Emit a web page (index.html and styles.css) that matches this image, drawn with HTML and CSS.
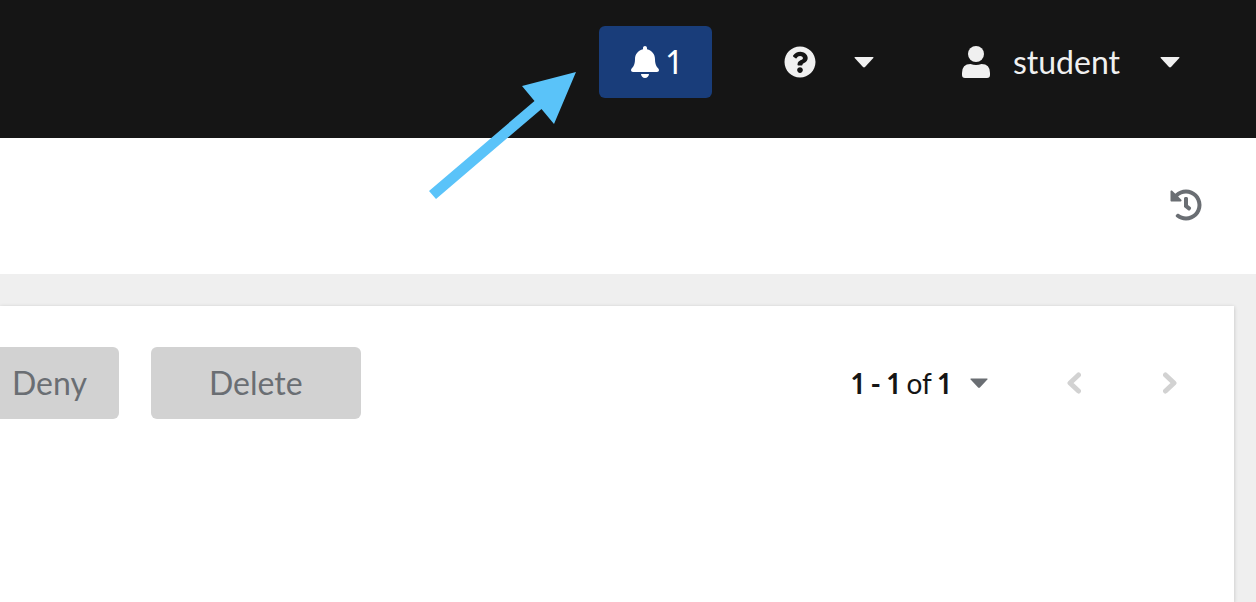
FILE: index.html
```html
<!DOCTYPE html>
<html lang="en">
<head>
<meta charset="utf-8">
<title>Approvals</title>
<link rel="stylesheet" href="styles.css">
</head>
<body>
<header class="masthead">
  <button class="bar-button notifications" type="button" aria-label="Notifications, 1 pending">
    <svg class="icon-bell" viewBox="0 0 448 512" aria-hidden="true"><path d="M224 512c35.32 0 63.97-28.65 63.97-64H160.03c0 35.35 28.65 64 63.97 64zm215.39-149.71c-19.32-20.76-55.47-51.99-55.47-154.29 0-77.7-54.48-139.9-127.94-155.16V32c0-17.67-14.32-32-31.98-32s-31.98 14.33-31.98 32v20.84C118.56 68.1 64.08 130.3 64.08 208c0 102.3-36.15 133.53-55.47 154.29-6 6.45-8.66 14.16-8.61 21.71.11 16.4 12.98 32 32.1 32h383.8c19.12 0 32-15.6 32.1-32 .05-7.55-2.61-15.27-8.61-21.71z"/></svg>
    <span>1</span>
  </button>
  <button class="bar-button help" type="button" aria-label="Help">
    <svg class="icon" viewBox="0 0 512 512" aria-hidden="true"><path d="M504 256c0 136.997-111.043 248-248 248S8 392.997 8 256C8 119.083 119.043 8 256 8s248 111.083 248 248zM262.655 90c-54.497 0-89.255 22.957-116.549 63.758-3.536 5.286-2.353 12.415 2.715 16.258l34.699 26.31c5.205 3.947 12.621 3.008 16.665-2.122 17.864-22.658 30.113-35.797 57.303-35.797 20.429 0 45.698 13.148 45.698 32.958 0 14.976-12.363 22.667-32.534 33.976C247.128 238.528 216 254.941 216 296v4c0 6.627 5.373 12 12 12h56c6.627 0 12-5.373 12-12v-1.333c0-28.462 83.186-29.647 83.186-106.667 0-58.002-60.165-102-116.531-102zM256 338c-25.365 0-46 20.635-46 46 0 25.364 20.635 46 46 46s46-20.636 46-46c0-25.365-20.635-46-46-46z"/></svg>
    <svg class="caret" viewBox="0 0 20 12" aria-hidden="true"><path d="M1.2 1h17.6q1.3 0 .5 1L11 11q-1 .9-2 0L.7 2q-.8-1 .5-1z"/></svg>
  </button>
  <button class="bar-button account" type="button">
    <svg class="icon-user" viewBox="0 0 28 32" aria-hidden="true"><circle cx="14" cy="8" r="8"/><path d="M8.500 18Q14 20 19.500 18Q28 18 28 27v2q0 3-3 3H3q-3 0-3-3v-2q0-9 8.500-9z"/></svg>
    <span class="account-name">student</span>
    <svg class="caret" viewBox="0 0 20 12" aria-hidden="true"><path d="M1.2 1h17.6q1.3 0 .5 1L11 11q-1 .9-2 0L.7 2q-.8-1 .5-1z"/></svg>
  </button>
</header>
<svg class="callout-arrow" viewBox="0 0 147 127" aria-hidden="true"><path d="M0 119 105.500 29 93 14 147 0 125 52 112.500 37 7 127z"/></svg>
<section class="page-header">
  <button class="history" type="button" aria-label="Activity history">
    <svg class="icon" viewBox="0 0 512 512" aria-hidden="true"><path d="M504 255.531c.253 136.64-111.18 248.372-247.82 248.468-59.015.042-113.223-20.53-155.822-54.911-11.077-8.94-11.905-25.541-1.839-35.607l11.267-11.267c8.609-8.609 22.353-9.551 31.891-1.984C173.062 425.135 212.781 440 256 440c101.705 0 184-82.311 184-184 0-101.705-82.311-184-184-184-48.814 0-93.149 18.969-126.068 49.932l50.754 50.754c10.08 10.08 2.941 27.314-11.313 27.314H24c-8.837 0-16-7.163-16-16V38.627c0-14.254 17.234-21.393 27.314-11.314l49.372 49.372C129.209 34.136 189.552 8 256 8c136.81 0 247.747 110.78 248 247.531zm-180.912 78.784l9.823-12.63c8.138-10.463 6.253-25.542-4.21-33.679L288 256.349V152c0-13.255-10.745-24-24-24h-16c-13.255 0-24 10.745-24 24v135.651l65.409 50.874c10.463 8.137 25.541 6.253 33.679-4.21z"/></svg>
  </button>
</section>
<main class="content">
  <div class="card">
    <div class="toolbar">
      <button class="action deny" type="button" disabled>Deny</button>
      <button class="action delete" type="button" disabled>Delete</button>
      <div class="pagination">
        <button class="range" type="button">
          <span><b>1 - 1</b> of <b>1</b></span>
          <svg class="caret caret-small" viewBox="0 0 20 12" aria-hidden="true"><path d="M1.2 1h17.6q1.3 0 .5 1L11 11q-1 .9-2 0L.7 2q-.8-1 .5-1z"/></svg>
        </button>
        <nav class="pager" aria-label="Pagination">
          <button class="step" type="button" disabled aria-label="Previous page"><svg class="chevron" viewBox="0 0 14 22" aria-hidden="true"><path d="M11.500 3 3 11l8.500 8"/></svg></button>
          <button class="step" type="button" disabled aria-label="Next page"><svg class="chevron" viewBox="0 0 14 22" aria-hidden="true"><path d="M2.500 3 11 11l-8.500 8"/></svg></button>
        </nav>
      </div>
    </div>
  </div>
</main>
</body>
</html>
```
FILE: styles.css
```css
* { box-sizing: border-box; }

body {
  display: flex;
  flex-direction: column;
  min-height: 100vh;
  margin: 0;
  background: #efefef;
  color: #151515;
  font-family: Lato, "Open Sans", sans-serif;
  font-size: 32px;
  font-variant-numeric: proportional-nums;
  line-height: 48px;
}

button {
  border: 0;
  background: none;
  color: inherit;
  font: inherit;
  font-variant-numeric: inherit;
}

svg {
  display: block;
  flex: none;
  fill: currentColor;
}

.masthead {
  display: flex;
  justify-content: flex-end;
  padding: 26px 44px 40px;
  background: #151515;
  color: #f0f0f0;
}

.bar-button {
  display: flex;
  align-items: center;
  height: 72px;
  padding: 0 32px;
}

.notifications {
  gap: 8px;
  margin-right: 40px;
  border-radius: 6px;
  background: #193d7a;
  color: #fff;
}

.help {
  gap: 38px;
  margin-right: 24px;
}

.icon { width: 32px; height: 32px; }
.icon-bell,
.icon-user { width: 28px; height: 32px; }
.account-name { margin: 0 40px 0 23px; }
.caret { width: 20px; height: 12px; }

.callout-arrow {
  position: absolute;
  top: 72px;
  left: 429px;
  width: 147px;
  height: 127px;
  fill: #5ac3f9;
}

.page-header {
  display: flex;
  justify-content: flex-end;
  padding: 35px 22px 37px;
  background: #fff;
}

.history {
  padding: 16px 32px;
  color: #6a6e73;
}

.content {
  display: flex;
  flex: 1;
  padding: 32px 22px 0 0;
}

.card {
  flex: 1;
  background: #fff;
  box-shadow: 0 1px 4px rgba(0, 0, 0, 0.2);
}

.toolbar {
  display: flex;
  align-items: center;
  padding: 41px 41px 0 0;
}

.action {
  height: 72px;
  border-radius: 6px;
  background: #d2d2d2;
  color: #6a6e73;
}

.deny {
  margin-right: 32px;
  padding: 0 32px 0 12px;
  border-radius: 0 6px 6px 0;
}

.delete { padding: 0 58px; }

.pagination {
  display: flex;
  align-items: center;
  gap: 63px;
  margin-left: auto;
}

.range {
  display: flex;
  align-items: center;
  gap: 20px;
  padding: 0;
  font-size: 28px;
}

.caret-small { width: 18px; color: #6a6e73; }

.pager {
  display: flex;
  gap: 50px;
}

.step {
  padding: 24px 16px;
  color: #d2d2d2;
}

.chevron {
  width: 14px;
  height: 22px;
  fill: none;
  stroke: currentColor;
  stroke-width: 5;
  stroke-linecap: round;
  stroke-linejoin: round;
}
```
